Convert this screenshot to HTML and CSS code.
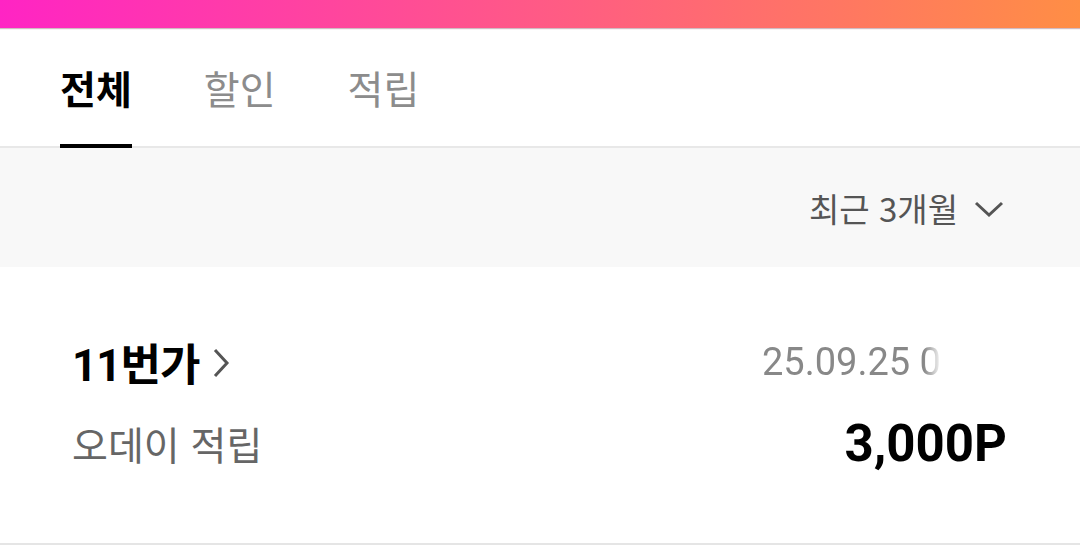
FILE: index.html
```html
<!DOCTYPE html>
<html lang="ko">
<head>
    <meta charset="UTF-8">
    <meta name="viewport" content="width=device-width, initial-scale=1.0">
    <title>포인트 내역</title>
    <link rel="stylesheet" href="styles.css">
</head>
<body>
    <div class="topbar"></div>

    <div class="tabs">
        <div class="tab active">전체</div>
        <div class="tab">할인</div>
        <div class="tab">적립</div>
    </div>

    <div class="filter">
        <span class="filter-label">최근 3개월</span>
        <svg class="filter-arrow" width="30" height="18" viewBox="0 0 30 18">
            <polyline points="2,3 15,15 28,3" fill="none" stroke="#555" stroke-width="3"/>
        </svg>
    </div>

    <div class="history">
        <div class="item">
            <div class="item-row">
                <div class="store">
                    <span class="store-name">11번가</span>
                    <svg class="store-arrow" width="18" height="30" viewBox="0 0 18 30">
                        <polyline points="3,2 15,15 3,28" fill="none" stroke="#555" stroke-width="3"/>
                    </svg>
                </div>
                <div class="date"><span>25.09.25 09:41</span></div>
            </div>
            <div class="item-row">
                <span class="desc">오데이 적립</span>
                <span class="amount">3,000P</span>
            </div>
        </div>
    </div>
</body>
</html>
```

FILE: styles.css
```css
body {
    margin: 0;
    padding: 0;
    background-color: #ffffff;
    font-family: Roboto, "Noto Sans CJK KR", sans-serif;
    color: #111;
}
.topbar {
    height: 28px;
    background: linear-gradient(90deg, #ff24c4 0%, #ff5a86 50%, #ff8e45 100%);
    box-shadow: 0 1px 1px rgba(120, 60, 80, 0.35);
}
.tabs {
    display: flex;
    gap: 72px;
    padding: 0 60px;
    height: 119px;
    border-bottom: 2px solid #e8e8e8;
    box-sizing: border-box;
    margin-top: 1px;
}
.tab {
    display: flex;
    align-items: center;
    font-family: "Noto Sans CJK KR", sans-serif;
    font-size: 39px;
    color: #8c8c8c;
    border-bottom: 4px solid transparent;
    margin-bottom: -2px;
}
.tab.active {
    color: #000;
    font-weight: bold;
    border-bottom-color: #000;
}
.filter {
    display: flex;
    justify-content: flex-end;
    align-items: center;
    gap: 16px;
    height: 119px;
    padding-right: 76px;
    background-color: #f8f8f8;
}
.filter-label {
    font-family: "Noto Sans CJK KR", sans-serif;
    font-size: 33px;
    color: #555;
}
.filter-arrow {
    margin-top: 2px;
}
.item {
    padding: 71px 73px 76px 72px;
    border-bottom: 2px solid #e5e5e5;
}
.item-row {
    display: flex;
    justify-content: space-between;
    align-items: center;
    height: 48px;
}
.item-row + .item-row {
    margin-top: 33px;
}
.store {
    display: flex;
    align-items: center;
    gap: 13px;
}
.store-name {
    font-family: Roboto, "Noto Sans CJK KR", sans-serif;
    font-size: 44px;
    font-weight: bold;
    color: #000;
    letter-spacing: -1px;
}
.store-arrow {
    margin-top: 2px;
}
.date {
    width: 180px;
    margin-right: 65px;
    overflow: hidden;
    white-space: nowrap;
    font-size: 38px;
    color: #888;
    -webkit-mask-image: linear-gradient(90deg, #000 90%, transparent 100%);
    mask-image: linear-gradient(90deg, #000 90%, transparent 100%);
}
.desc {
    font-family: "Noto Sans CJK KR", sans-serif;
    font-size: 39px;
    color: #666;
}
.amount {
    font-family: Roboto, sans-serif;
    font-size: 51px;
    font-weight: bold;
    color: #000;
}
```
